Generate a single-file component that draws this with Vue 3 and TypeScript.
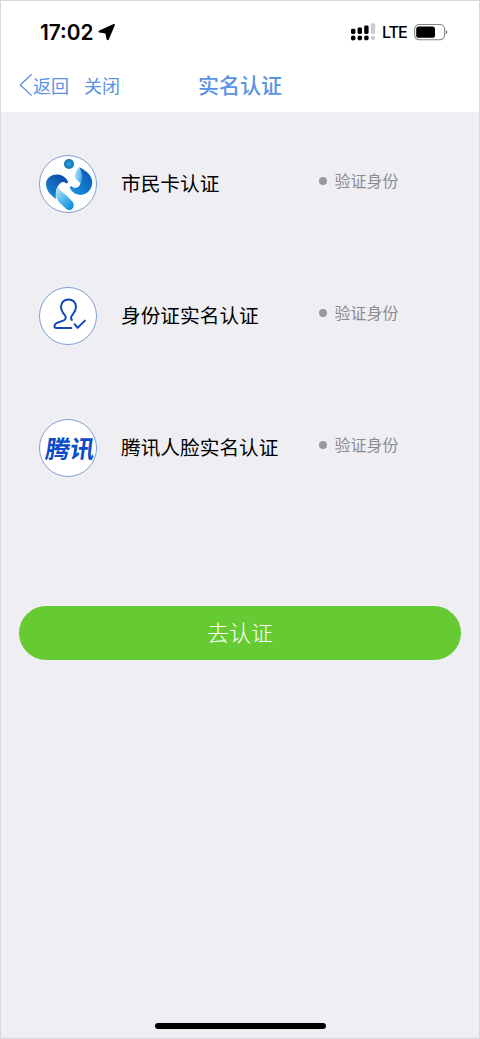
<script setup lang="ts">
interface AuthMethod {
  id: 'citizen' | 'person' | 'tencent'
  name: string
  action: string
}

const methods: AuthMethod[] = [
  { id: 'citizen', name: '市民卡认证', action: '验证身份' },
  { id: 'person', name: '身份证实名认证', action: '验证身份' },
  { id: 'tencent', name: '腾讯人脸实名认证', action: '验证身份' },
]
</script>

<template>
  <div class="screen">
    <header class="top">
      <div class="status">
        <span class="time">17:02</span>
        <svg class="arrow" width="18" height="18" viewBox="0 0 18 18">
          <path d="M15.6 1 L1.4 7.4 Q-.4 8.4 1.2 9.6 L7.4 10.5 L8.6 16.2 Q9.5 18 10.8 16.4 L16.8 2.2 Q17.1 .6 15.6 1Z" />
        </svg>
        <svg class="signal" width="25" height="18" viewBox="0 0 25 18">
          <rect x="0" y="5.7" width="4.4" height="5.2" rx="1.4" />
          <rect x="6.6" y="4.6" width="4.4" height="6.3" rx="1.4" />
          <rect x="13.2" y="2.4" width="4.4" height="8.5" rx="1.4" />
          <rect class="off" x="19.8" y=".2" width="4.4" height="10.7" rx="1.4" />
          <circle cx="2.2" cy="15" r="2.4" />
          <circle cx="8.8" cy="15" r="2.4" />
          <circle cx="15.4" cy="15" r="2.4" />
          <circle class="off" cx="22" cy="15" r="2.2" />
        </svg>
        <span class="lte">LTE</span>
        <svg class="battery" width="34" height="17" viewBox="0 0 34 17">
          <rect x=".6" y=".5" width="30" height="15.2" rx="4.6" fill="none" stroke="#858585" stroke-width="1.1" />
          <rect x="2.2" y="2.4" width="18.8" height="11.4" rx="2.6" />
          <path d="M31.8 5.9 Q33.4 6.7 33.4 8 Q33.4 9.4 31.8 10.2Z" fill="#777" />
        </svg>
      </div>
      <nav class="nav">
        <a class="back">
          <svg width="14" height="24" viewBox="0 0 14 24">
            <path d="M12.6 1.2 L1.3 12 L12.6 22.6" fill="none" stroke="#5a92e4" stroke-width="1.3" />
          </svg>
          <span>返回</span>
        </a>
        <a class="close">关闭</a>
        <h1 class="title">实名认证</h1>
      </nav>
    </header>

    <main class="content">
      <section v-for="m in methods" :key="m.id" class="card">
        <div class="badge" :class="m.id">
          <svg v-if="m.id === 'citizen'" width="58" height="58" viewBox="0 0 58 58">
            <defs>
              <linearGradient id="leftArc" x1="0" y1="1" x2=".8" y2="0">
                <stop offset="0" stop-color="#1d93de" />
                <stop offset="1" stop-color="#0a48a6" />
              </linearGradient>
              <linearGradient id="leftLeg" x1="0" y1="0" x2=".8" y2="1">
                <stop offset="0" stop-color="#c5ebfc" />
                <stop offset=".55" stop-color="#52b8ec" />
                <stop offset="1" stop-color="#118bd9" />
              </linearGradient>
              <linearGradient id="rightTop" x1="0" y1=".3" x2="1" y2=".7">
                <stop offset="0" stop-color="#b9e7fb" />
                <stop offset="1" stop-color="#3fa8e3" />
              </linearGradient>
              <linearGradient id="rightArc" x1="0" y1="1" x2=".8" y2="0">
                <stop offset="0" stop-color="#1c96e0" />
                <stop offset="1" stop-color="#0a56b4" />
              </linearGradient>
              <radialGradient id="head">
                <stop offset="0" stop-color="#3aa1d9" />
                <stop offset="1" stop-color="#0870b9" />
              </radialGradient>
            </defs>
            <circle cx="30" cy="9" r="5" fill="url(#head)" />
            <path d="M17 44 C10.5 39.5 7 34.5 7 29 C7 23.5 11.5 19.6 17.5 19.4 C22.5 19.3 27 22 28.9 26.4 C29.4 28 27.8 28.9 26.6 28 C25.6 26.8 23.4 26.6 21.6 28 C17.6 31.2 16.2 37.5 17 44Z" fill="url(#leftArc)" />
            <path d="M18.6 31.6 C20.4 35.4 24 37.4 27 40 L33.4 46.4 C35.8 49.2 34.6 53 32.6 54.4 C30.8 55.4 28.8 55 27.4 54 L20.6 47.8 C16.6 43.8 15.6 37.4 18.6 31.6Z" fill="url(#leftLeg)" />
            <path d="M40.4 12.2 C48.5 16 53.5 21.6 53.3 27.6 C53 34.6 48 39.8 41.8 39.9 C36.8 39.9 32.6 37 31 33.3 C30.6 31.4 32.6 30.8 33.6 31.9 C35 33.2 38 33.2 40 31.2 C43 28 42 19 40.4 12.2Z" fill="url(#rightArc)" />
            <path d="M40.4 12.2 C42.8 16.4 44.2 22 42 27.4 C41.4 28.6 40.6 28 40.2 27.2 C38.8 25.2 36.2 24.6 35.8 21.6 C35.5 18 37.6 14.6 40.4 12.2Z" fill="url(#rightTop)" />
          </svg>
          <svg v-else-if="m.id === 'person'" width="58" height="58" viewBox="0 0 58 58">
            <g fill="none" stroke="#1149b8" stroke-width="2" stroke-linecap="round" stroke-linejoin="round">
              <path d="M32.3 41 H17.2 Q15.4 41 15.5 39.2 Q15.7 36.8 18 35.9 L24.8 33.4 C27 32.5 27.3 30 25.8 28.2 C23 25 22 22.5 22 19.8 C22 15.6 25.2 12.5 29.5 12.5 C33.8 12.5 37 15.6 37 19.8 C37 22.7 35.8 25.1 33.8 27.4 C31.8 29.6 31.6 31.6 33 32.9" />
              <path d="M35.6 37.2 L38.6 40.8 L46 33.6" />
            </g>
          </svg>
          <span v-else>腾讯</span>
        </div>
        <span class="name">{{ m.name }}</span>
        <span class="action"><i class="dot"></i><span class="label">{{ m.action }}</span></span>
      </section>
      <button class="submit" type="button">去认证</button>
    </main>
    <div class="home"></div>
  </div>
</template>

<style>
html,
body {
  margin: 0;
}
</style>

<style scoped>
.screen {
  box-sizing: border-box;
  width: 480px;
  height: 1039px;
  display: flex;
  flex-direction: column;
  border: 1px solid #d8d8da;
  background: #efeef3;
  font-family: "Noto Sans CJK SC", sans-serif;
  overflow: hidden;
}

.top {
  height: 111px;
  flex: none;
  background: #fff;
}

.status {
  display: flex;
  align-items: center;
  height: 62px;
  padding-left: 39px;
  font-family: Inter, sans-serif;
}

.time {
  width: 54px;
  font-size: 20.8px;
  font-weight: 600;
  white-space: nowrap;
}

.arrow {
  margin-left: 4px;
}

.signal {
  margin-left: 235px;
}

.signal .off {
  fill: #ccc;
}

.lte {
  width: 26px;
  margin-left: 6px;
  font-size: 16.3px;
  font-weight: 500;
  letter-spacing: -1.2px;
  white-space: nowrap;
}

.battery {
  margin-left: 6px;
}

.nav {
  display: grid;
  grid-template-columns: 65px 114px 1fr;
  align-items: center;
  height: 46px;
  margin-top: -1px;
  padding-left: 18px;
  color: #5a92e4;
  font-size: 18px;
  line-height: 24px;
}

.back {
  display: flex;
  align-items: center;
  white-space: nowrap;
}

.title {
  margin: 0;
  padding-bottom: 3px;
  font-size: 21px;
  font-weight: 500;
  line-height: 24px;
}

.content {
  display: flex;
  flex-direction: column;
  padding: 19px 18px 0;
}

.card {
  box-sizing: border-box;
  display: flex;
  align-items: center;
  height: 113px;
  margin: 0 0 18.8px 1px;
  padding: 0 0 7px 18px;
  border: 1px solid #f2f1f5;
  border-radius: 5px;
}

.badge {
  box-sizing: border-box;
  display: flex;
  align-items: center;
  justify-content: center;
  width: 58px;
  height: 58px;
  flex: none;
  border: 1px solid #7f9fd2;
  border-radius: 50%;
  background: #fff;
}

.badge svg {
  flex: none;
}

.badge span {
  padding: 0 0 0 4px;
  color: #0c4cc8;
  font-size: 24.5px;
  font-weight: 700;
  line-height: 30px;
  white-space: nowrap;
  transform: skewX(-8deg);
}

.name {
  width: 198px;
  margin-left: 24px;
  padding-bottom: 1.6px;
  color: #000;
  font-size: 19.7px;
  line-height: 26px;
  white-space: nowrap;
}

.action {
  display: flex;
  align-items: center;
  margin-bottom: 5.4px;
  color: #8c8c90;
  font-size: 16px;
  line-height: 22px;
  white-space: nowrap;
}

.label {
  padding-bottom: 2px;
}

.dot {
  width: 8px;
  height: 8px;
  margin-right: 7.4px;
  border-radius: 50%;
  background: #99999c;
}

.submit {
  height: 54px;
  margin-top: 79.3px;
  padding: 0 0 4px;
  border: 0;
  border-radius: 27px;
  background: #66cb33;
  color: #fff;
  font-family: inherit;
  font-size: 22px;
  font-weight: 300;
}

.home {
  width: 171px;
  height: 6px;
  margin: auto auto 9px 154px;
  border-radius: 3px;
  background: #000;
}
</style>
